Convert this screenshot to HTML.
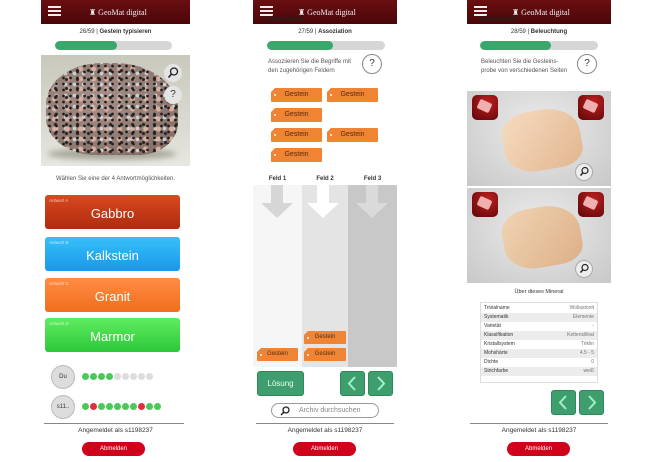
<!DOCTYPE html>
<html><head><meta charset="utf-8"><style>
*{margin:0;padding:0;box-sizing:border-box}
body{width:650px;height:462px;background:#fff;position:relative;overflow:hidden;font-family:"Liberation Sans",sans-serif;color:#333}
.a{position:absolute}
.hdr{background:linear-gradient(#6a0f12,#4a0608);height:24px}
.burger{left:7px;top:6px;width:13px;height:2px;background:#eee;box-shadow:0 4px 0 #eee,0 8px 0 #eee}
.logo{color:#eee;font-family:"Liberation Serif",serif;font-size:8px;top:8px}
.t{font-size:6px;text-align:center}
.bar{height:9px;border-radius:5px;background:#d6d6d6;overflow:hidden}
.bar div{height:100%;background:#3aa86c;border-radius:5px}
.ans{border-radius:3px;color:#fff;font-size:13px;text-align:center;padding-top:11px}
.ans span{position:absolute;left:4px;top:3px;font-size:4.5px;color:rgba(255,255,255,.7)}
.circ{border-radius:50%;background:#ddd;border:1px solid #bbb;font-size:6px;text-align:center}
.dot{width:7px;height:7px;border-radius:50%;top:0}
.tag{background:#ee8434;color:#5a2a10;font-size:7px;text-align:center;height:14px;line-height:14px;border-radius:1px;clip-path:polygon(4px 0,100% 0,100% 100%,0 100%,0 4px)}
.tag:before{content:"";position:absolute;left:3px;top:6px;width:2px;height:2px;background:#fff;border-radius:50%}
.gb{background:#3e9e6e;border-radius:3px;color:#e8fff0;border:1px solid #2e8a5a}
.abm{background:#d0021b;color:#fff;font-size:6px;text-align:center;border-radius:8px;height:14px;line-height:14px}
.q{border:1px solid #888;border-radius:50%;text-align:center;font-size:10px;background:#fff}
.ic{width:26px;height:25px;border-radius:5px;background:radial-gradient(circle at 60% 30%,#c02020,#5a0508)}
.ic:after{content:"";position:absolute;left:6px;top:6px;width:13px;height:10px;background:#f0b0b0;transform:rotate(25deg);border-radius:2px}
.mag{width:18px;height:18px;border-radius:50%;background:rgba(240,240,240,.9);border:1px solid #aaa}
.row{height:9px;font-size:5px;line-height:9px;padding:0 3px;display:flex;justify-content:space-between}
.row:nth-child(even){background:#ececec}
.row b{font-weight:normal;color:#777}
</style></head><body>

<!-- Panel 1 -->
<div class="a hdr" style="left:41px;top:0;width:149px"><div class="a burger"></div><div class="a logo" style="left:48px">♜ GeoMat digital</div></div>
<div class="a t" style="left:41px;top:29px;width:149px">26/59 | <b>Gestein typisieren</b></div>
<div class="a bar" style="left:55px;top:41px;width:117px"><div style="width:62px"></div></div>
<div class="a" style="left:41px;top:55px;width:149px;height:111px;background:linear-gradient(#c8c8bc,#dcdcd4 70%,#e8e8e2)">
 <div class="a" style="left:6px;top:93px;width:130px;height:12px;border-radius:50%;background:#a8a89a;filter:blur(3px)"></div>
 <div class="a" style="left:5px;top:8px;width:132px;height:92px;border-radius:42% 48% 30% 38%/45% 50% 35% 40%;background:
  radial-gradient(circle,#1c1c1c 1px,transparent 1.7px) 0 0/7px 6px,
  radial-gradient(circle,#2a2a2a 1.3px,transparent 2px) 4px 3px/11px 9px,
  radial-gradient(circle,#d8b0a0 2px,transparent 3px) 2px 1px/13px 10px,
  radial-gradient(circle,#c8d0d4 1.5px,transparent 2.2px) 6px 5px/9px 11px,
  radial-gradient(ellipse at 40% 40%,#a89088,#806a62)"></div>
 <div class="a" style="left:123px;top:9px;width:18px;height:18px;border-radius:50%;background:#e4e4e4"><svg width="18" height="18"><circle cx="10" cy="7.5" r="3.5" stroke="#222" stroke-width="1.3" fill="none"/><path d="M7.5 10L4.5 13.5" stroke="#222" stroke-width="1.6"/></svg></div>
 <div class="a" style="left:123px;top:31px;width:18px;height:18px;border-radius:50%;background:#e4e4e4;font-size:10px;text-align:center;line-height:18px">?</div>
</div>
<div class="a t" style="left:41px;top:176px;width:149px;color:#555">Wählen Sie eine der 4 Antwortmöglichkeiten.</div>
<div class="a ans" style="left:45px;top:195px;width:135px;height:34px;background:linear-gradient(#d84a1e,#b02a10)"><span>Antwort A</span>Gabbro</div>
<div class="a ans" style="left:45px;top:237px;width:135px;height:34px;background:linear-gradient(#36c0f8,#1a98ea)"><span>Antwort B</span>Kalkstein</div>
<div class="a ans" style="left:45px;top:278px;width:135px;height:34px;background:linear-gradient(#ff8c44,#f06e1c)"><span>Antwort C</span>Granit</div>
<div class="a ans" style="left:45px;top:318px;width:135px;height:34px;background:linear-gradient(#60ec60,#2cc83a)"><span>Antwort D</span>Marmor</div>
<div class="a circ" style="left:51px;top:365px;width:24px;height:24px;line-height:22px">Du</div>
<div class="a circ" style="left:51px;top:395px;width:24px;height:24px;line-height:22px">s11..</div>
<div class="a" style="left:82px;top:373px">
 <div class="a dot" style="left:0;background:#4cc85a"></div><div class="a dot" style="left:8px;background:#4cc85a"></div><div class="a dot" style="left:16px;background:#4cc85a"></div><div class="a dot" style="left:24px;background:#4cc85a"></div><div class="a dot" style="left:32px;background:#ddd"></div><div class="a dot" style="left:40px;background:#ddd"></div><div class="a dot" style="left:48px;background:#ddd"></div><div class="a dot" style="left:56px;background:#ddd"></div><div class="a dot" style="left:64px;background:#ddd"></div></div>
<div class="a" style="left:82px;top:403px">
 <div class="a dot" style="left:0;background:#4cc85a"></div><div class="a dot" style="left:8px;background:#e03040"></div><div class="a dot" style="left:16px;background:#4cc85a"></div><div class="a dot" style="left:24px;background:#4cc85a"></div><div class="a dot" style="left:32px;background:#4cc85a"></div><div class="a dot" style="left:40px;background:#4cc85a"></div><div class="a dot" style="left:48px;background:#4cc85a"></div><div class="a dot" style="left:56px;background:#e03040"></div><div class="a dot" style="left:64px;background:#4cc85a"></div><div class="a dot" style="left:72px;background:#4cc85a"></div></div>
<div class="a" style="left:44px;top:423px;width:140px;height:1px;background:#888"></div>
<div class="a t" style="left:41px;top:427px;width:149px;font-size:6.5px">Angemeldet als s1198237</div>
<div class="a abm" style="left:82px;top:442px;width:63px">Abmelden</div>

<!-- Panel 2 -->
<div class="a hdr" style="left:253px;top:0;width:144px"><div class="a burger"></div><div class="a logo" style="left:45px">♜ GeoMat digital</div><div class="a" style="left:12px;top:16px;font-size:7px;color:#222;font-weight:bold">Information</div></div>
<div class="a t" style="left:253px;top:29px;width:144px">27/59 | <b>Assoziation</b></div>
<div class="a bar" style="left:267px;top:41px;width:118px"><div style="width:66px"></div></div>
<div class="a" style="left:268px;top:58px;font-size:6px;line-height:9px;color:#555">Assoziieren Sie die Begriffe mit<br>den zugehörigen Feldern</div>
<div class="a q" style="left:362px;top:54px;width:20px;height:20px;line-height:18px">?</div>
<div class="a tag" style="left:271px;top:88px;width:51px">Gestein</div>
<div class="a tag" style="left:327px;top:88px;width:51px">Gestein</div>
<div class="a tag" style="left:271px;top:108px;width:51px">Gestein</div>
<div class="a tag" style="left:271px;top:128px;width:51px">Gestein</div>
<div class="a tag" style="left:327px;top:128px;width:51px">Gestein</div>
<div class="a tag" style="left:271px;top:148px;width:51px">Gestein</div>
<div class="a" style="left:253px;top:176px;width:49px;font-size:6px;font-weight:bold;text-align:center">Feld 1</div>
<div class="a" style="left:302px;top:176px;width:46px;font-size:6px;font-weight:bold;text-align:center">Feld 2</div>
<div class="a" style="left:348px;top:176px;width:49px;font-size:6px;font-weight:bold;text-align:center">Feld 3</div>
<div class="a" style="left:253px;top:185px;width:49px;height:182px;background:#f6f6f6"></div>
<div class="a" style="left:302px;top:185px;width:46px;height:182px;background:#e4e4e4"></div>
<div class="a" style="left:348px;top:185px;width:49px;height:182px;background:#c8c8c8"></div>
<svg class="a" style="left:253px;top:185px" width="144" height="34"><path d="M18 0h12v18h10L24 33 8 18h10z" fill="#d6d6d6"/><path d="M64 0h12v18h10L70 33 54 18h10z" fill="#fff"/><path d="M113 0h12v18h10L119 33 103 18h10z" fill="#dadada"/></svg>
<div class="a tag" style="left:257px;top:348px;width:41px;font-size:6px;height:13px;line-height:13px">Gestein</div>
<div class="a tag" style="left:304px;top:331px;width:42px;font-size:6px;height:13px;line-height:13px">Gestein</div>
<div class="a tag" style="left:304px;top:348px;width:42px;font-size:6px;height:13px;line-height:13px">Gestein</div>
<div class="a gb" style="left:257px;top:371px;width:47px;height:25px;font-size:8px;text-align:center;line-height:23px">Lösung</div>
<div class="a gb" style="left:340px;top:371px;width:25px;height:25px"><svg width="23" height="23"><path d="M14 5l-6 6.5 6 6.5" stroke="#9ff0c8" stroke-width="2" fill="none"/></svg></div>
<div class="a gb" style="left:368px;top:371px;width:25px;height:25px"><svg width="23" height="23"><path d="M9 5l6 6.5-6 6.5" stroke="#9ff0c8" stroke-width="2" fill="none"/></svg></div>
<div class="a" style="left:271px;top:403px;width:108px;height:15px;border:1px solid #999;border-radius:8px;font-size:7px;color:#888;line-height:13px;padding-left:27px">Archiv durchsuchen<svg class="a" style="left:8px;top:2px" width="10" height="10"><circle cx="6" cy="4" r="3" stroke="#222" stroke-width="1.3" fill="none"/><path d="M4 6L1 9" stroke="#222" stroke-width="1.5"/></svg></div>
<div class="a" style="left:256px;top:423px;width:138px;height:1px;background:#888"></div>
<div class="a t" style="left:253px;top:427px;width:144px;font-size:6.5px">Angemeldet als s1198237</div>
<div class="a abm" style="left:293px;top:442px;width:63px">Abmelden</div>

<!-- Panel 3 -->
<div class="a hdr" style="left:467px;top:0;width:144px"><div class="a burger"></div><div class="a logo" style="left:45px">♜ GeoMat digital</div><div class="a" style="left:12px;top:16px;font-size:7px;color:#222;font-weight:bold">Information</div></div>
<div class="a t" style="left:467px;top:29px;width:144px">28/59 | <b>Beleuchtung</b></div>
<div class="a bar" style="left:480px;top:41px;width:118px"><div style="width:71px"></div></div>
<div class="a" style="left:481px;top:58px;font-size:6px;line-height:9px;color:#555">Beleuchten Sie die Gesteins-<br>probe von verschiedenen Seiten</div>
<div class="a q" style="left:577px;top:54px;width:20px;height:20px;line-height:18px">?</div>
<div class="a" style="left:467px;top:91px;width:144px;height:95px;background:radial-gradient(ellipse at 50% 40%,#ececec,#c8c8c8)">
 <div class="a" style="left:36px;top:19px;width:78px;height:60px;border-radius:35% 45% 30% 40%;background:linear-gradient(135deg,#f6dcc0,#e2b690);transform:rotate(-10deg)"></div>
 <div class="a ic" style="left:5px;top:4px"></div><div class="a ic" style="left:111px;top:4px"></div>
 <div class="a mag" style="left:108px;top:72px"><svg width="16" height="16"><circle cx="9" cy="6.5" r="3" stroke="#222" stroke-width="1.2" fill="none"/><path d="M7 8.8L4.5 11.5" stroke="#222" stroke-width="1.5"/></svg></div></div>
<div class="a" style="left:467px;top:188px;width:144px;height:95px;background:radial-gradient(ellipse at 50% 40%,#ececec,#c8c8c8)">
 <div class="a" style="left:36px;top:19px;width:78px;height:60px;border-radius:35% 45% 30% 40%;background:linear-gradient(135deg,#f0d4b4,#ddb088);transform:rotate(-10deg)"></div>
 <div class="a ic" style="left:5px;top:4px"></div><div class="a ic" style="left:111px;top:4px"></div>
 <div class="a mag" style="left:108px;top:72px"><svg width="16" height="16"><circle cx="9" cy="6.5" r="3" stroke="#222" stroke-width="1.2" fill="none"/><path d="M7 8.8L4.5 11.5" stroke="#222" stroke-width="1.5"/></svg></div></div>
<div class="a t" style="left:467px;top:289px;width:144px;font-size:5.5px">Über dieses Mineral</div>
<div class="a" style="left:480px;top:302px;width:118px;height:81px;border:1px solid #ddd;padding-top:1px">
 <div class="row"><span>Trivialname</span><b>Wollastonit</b></div>
 <div class="row"><span>Systematik</span><b>Elemente</b></div>
 <div class="row"><span>Varietät</span><b>-</b></div>
 <div class="row"><span>Klassifikation</span><b>Kettensilikat</b></div>
 <div class="row"><span>Kristallsystem</span><b>Triklin</b></div>
 <div class="row"><span>Mohshärte</span><b>4.5 - 5</b></div>
 <div class="row"><span>Dichte</span><b>0</b></div>
 <div class="row"><span>Strichfarbe</span><b>weiß</b></div>
</div>
<div class="a gb" style="left:551px;top:390px;width:25px;height:25px"><svg width="23" height="23"><path d="M14 5l-6 6.5 6 6.5" stroke="#9ff0c8" stroke-width="2" fill="none"/></svg></div>
<div class="a gb" style="left:579px;top:390px;width:25px;height:25px"><svg width="23" height="23"><path d="M9 5l6 6.5-6 6.5" stroke="#9ff0c8" stroke-width="2" fill="none"/></svg></div>
<div class="a" style="left:470px;top:423px;width:138px;height:1px;background:#888"></div>
<div class="a t" style="left:467px;top:427px;width:144px;font-size:6.5px">Angemeldet als s1198237</div>
<div class="a abm" style="left:507px;top:442px;width:63px">Abmelden</div>
</body></html>
